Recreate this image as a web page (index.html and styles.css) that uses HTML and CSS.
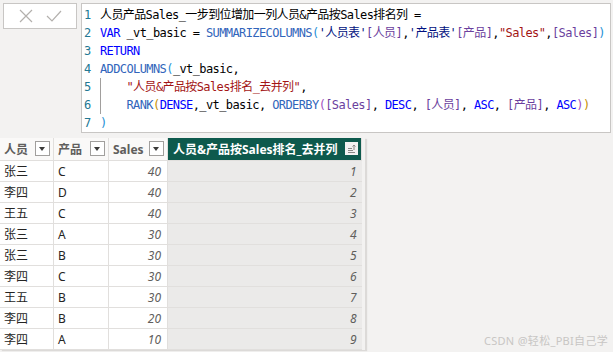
FILE: index.html
```html
<!DOCTYPE html>
<html lang="zh-CN">
<head>
<meta charset="UTF-8">
<title>DAX 公式</title>
<link rel="stylesheet" href="styles.css">
</head>
<body>
<div class="top">
    <div class="commit-box">
        <svg width="14" height="14" viewBox="0 0 14 14"><path d="M1 1 L13 13 M13 1 L1 13" stroke="#b3b0ad" stroke-width="1.2" fill="none"/></svg>
        <svg width="16" height="14" viewBox="0 0 16 14"><path d="M1 7 L6 12 L15 2" stroke="#b3b0ad" stroke-width="1.2" fill="none"/></svg>
    </div>
    <div class="editor">
        <div class="line"><span class="num">1</span><span class="code">人员产品Sales_一步到位增加一列人员&amp;产品按Sales排名列 =</span></div>
        <div class="line"><span class="num">2</span><span class="code"><span class="kw">VAR</span> _vt_basic = <span class="fn">SUMMARIZECOLUMNS</span><span class="p1">(</span><span class="tb">'人员表'</span><span class="col">[人员]</span>,<span class="tb">'产品表'</span><span class="col">[产品]</span>,<span class="str">"Sales"</span>,<span class="col">[Sales]</span><span class="p1">)</span></span></div>
        <div class="line"><span class="num">3</span><span class="code"><span class="kw">RETURN</span></span></div>
        <div class="line"><span class="num">4</span><span class="code"><span class="fn">ADDCOLUMNS</span><span class="p1">(</span>_vt_basic,</span></div>
        <div class="line"><span class="num">5</span><span class="code guide">    <span class="str">"人员&amp;产品按Sales排名_去并列"</span>,</span></div>
        <div class="line"><span class="num">6</span><span class="code guide">    <span class="fn">RANK</span><span class="p2">(</span><span class="kw">DENSE</span>,_vt_basic, <span class="fn">ORDERBY</span><span class="p3">(</span><span class="col">[Sales]</span>, <span class="kw">DESC</span>, <span class="col">[人员]</span>, <span class="kw">ASC</span>, <span class="col">[产品]</span>, <span class="kw">ASC</span><span class="p3">)</span><span class="p2">)</span></span></div>
        <div class="line"><span class="num">7</span><span class="code"><span class="p1">)</span></span></div>
    </div>
</div>

<div class="grid-wrap">
    <table class="grid">
        <thead>
            <tr>
                <th class="c1">人员<span class="drop"></span></th>
                <th class="c2">产品<span class="drop"></span></th>
                <th class="c3">Sales<span class="drop"></span></th>
                <th class="c4">人员&amp;产品按Sales排名_去并列<span class="sort"><svg width="9" height="9" viewBox="0 0 9 9"><path d="M1 8.5 H8 M1 6.5 H6 M1 4.5 H5 M7 6 V1 M5.5 2.5 L7 1 L8.5 2.5" stroke="#8a8886" fill="none"/></svg></span></th>
            </tr>
        </thead>
        <tbody id="rows"></tbody>
    </table>
</div>

<div class="watermark">CSDN @轻松_PBI自己学</div>

<script>
    let rows = [
        ["张三", "C", 40, 1],
        ["李四", "D", 40, 2],
        ["王五", "C", 40, 3],
        ["张三", "A", 30, 4],
        ["张三", "B", 30, 5],
        ["李四", "C", 30, 6],
        ["王五", "B", 30, 7],
        ["李四", "B", 20, 8],
        ["李四", "A", 10, 9]
    ];
    let tbody = document.getElementById('rows');
    for (let i = 0; i < rows.length; i++) {
        let r = rows[i];
        tbody.innerHTML += `
            <tr>
                <td>${r[0]}</td>
                <td>${r[1]}</td>
                <td class="n">${r[2]}</td>
                <td class="n sel">${r[3]}</td>
            </tr>`;
    }
</script>
</body>
</html>
```

FILE: styles.css
```css
body {
    margin: 0;
    background: #f3f2f1;
    font-family: "Noto Sans", "Noto Sans CJK SC", sans-serif;
    width: 613px;
    height: 352px;
    overflow: hidden;
    position: relative;
}
.top {
    display: flex;
    gap: 4px;
    padding: 3px 2px 0 3px;
    align-items: flex-start;
}
.commit-box {
    width: 74px;
    height: 26px;
    background: #fff;
    border: 1px solid #c8c6c4;
    box-sizing: border-box;
    display: flex;
    align-items: center;
    justify-content: center;
    gap: 13px;
}
.editor {
    flex: 1;
    height: 130px;
    background: #fff;
    border: 1px solid #c8c6c4;
    box-sizing: border-box;
    padding-top: 2px;
    font-family: "DejaVu Sans Mono", "Noto Sans CJK SC", monospace;
    font-size: 12px;
    letter-spacing: -0.6px;
    color: #000;
}
.line {
    display: flex;
    height: 18px;
    line-height: 18px;
    white-space: pre;
}
.num {
    width: 16px;
    padding-left: 2px;
    color: #237893;
}
.code.guide {
    background: linear-gradient(#a19f9d, #a19f9d) no-repeat 0 0 / 1px 100%;
}
.kw { color: #0000ff; }
.fn { color: #3165bb; }
.str { color: #a31515; }
.tb { color: #001080; }
.col { color: #6b3f9e; }
.p1 { color: #1d8fd6; }
.p2 { color: #c48f00; }
.p3 { color: #a04ec0; }

.grid-wrap {
    margin-top: 5px;
    width: 365px;
    box-shadow: 2px 1px 1px #dcdad8;
}
.grid {
    border-collapse: collapse;
    table-layout: fixed;
    width: 362px;
    font-size: 12px;
    color: #252423;
}
.grid th {
    height: 22px;
    padding: 0 0 0 4px;
    text-align: left;
    font-weight: bold;
    color: #605e5c;
    background: #faf9f8;
    border-right: 1px solid #e1dfdd;
    white-space: nowrap;
    position: relative;
}
.grid th.c1 { width: 49px; }
.grid th.c2 { width: 50px; }
.grid th.c3 { width: 54px; }
.grid th.c4 {
    background: #0e5a4d;
    color: #fff;
    padding-left: 5px;
}
.drop {
    position: absolute;
    right: 3px;
    top: 3px;
    width: 13px;
    height: 13px;
    border: 1px solid #a19f9d;
    background: #fff;
}
.drop::after {
    content: "";
    position: absolute;
    left: 3px;
    top: 5px;
    border-left: 3.5px solid transparent;
    border-right: 3.5px solid transparent;
    border-top: 4px solid #3b3a39;
}
.sort {
    position: absolute;
    right: 3px;
    top: 4px;
    width: 13px;
    height: 13px;
    background: #f3f2f1;
    display: flex;
    align-items: center;
    justify-content: center;
}
.grid td {
    height: 20px;
    padding: 0 4px;
    background: #fff;
    border-top: 1px solid #e1dfdd;
    border-right: 1px solid #e1dfdd;
    border-bottom: 1px solid #e1dfdd;
    white-space: nowrap;
}
.grid td.n {
    text-align: right;
    font-style: italic;
    color: #605e5c;
    padding-right: 6px;
}
.grid td.sel {
    background: #ebeae9;
    border-right: none;
    padding-right: 5px;
}
.watermark {
    position: absolute;
    right: 5px;
    bottom: 4px;
    font-size: 11px;
    color: #c8c6c4;
    letter-spacing: 0.3px;
}
```
